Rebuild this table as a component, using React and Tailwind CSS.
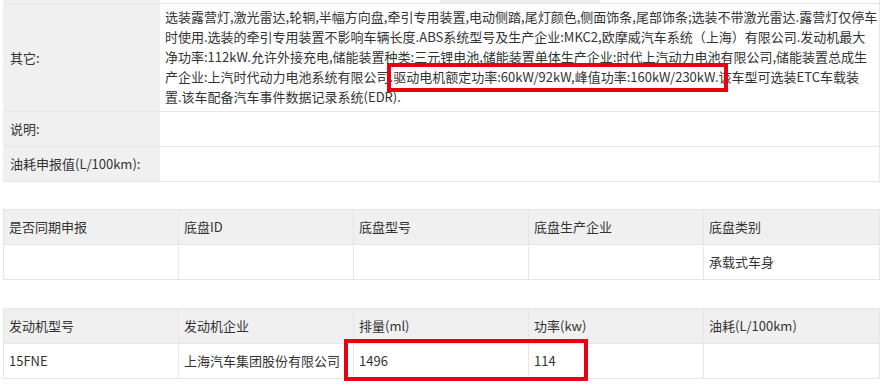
const lines = [
  '选装露营灯,激光雷达,轮辋,半幅方向盘,牵引专用装置,电动侧踏,尾灯颜色,侧面饰条,尾部饰条;选装不带激光雷达.露营灯仅停车',
  '时使用.选装的牵引专用装置不影响车辆长度.ABS系统型号及生产企业:MKC2,欧摩威汽车系统（上海）有限公司.发动机最大',
  '净功率:112kW.允许外接充电,储能装置种类:三元锂电池,储能装置单体生产企业:时代上汽动力电池有限公司,储能装置总成生',
  '产企业:上汽时代动力电池系统有限公司.驱动电机额定功率:60kW/92kW,峰值功率:160kW/230kW.该车型可选装ETC车载装',
  '置.该车配备汽车事件数据记录系统(EDR).',
];

const chassisHead = ['是否同期申报', '底盘ID', '底盘型号', '底盘生产企业', '底盘类别'];
const chassisBody = ['', '', '', '', '承载式车身'];
const engineHead = ['发动机型号', '发动机企业', '排量(ml)', '功率(kw)', '油耗(L/100km)'];
const engineBody = ['15FNE', '上海汽车集团股份有限公司', '1496', '114', ''];

function GridTable({ head, body }) {
  return (
    <div className="ml-[3px] w-[877px] border border-[#e6e6e6]">
      <div className="grid grid-cols-5 h-[35px] bg-[#f0f0f0] border-b border-[#e6e6e6]">
        {head.map((t, i) => (
          <div key={i} className="flex items-center pl-[5px] border-r border-[#e6e6e6] last:border-r-0">
            {t}
          </div>
        ))}
      </div>
      <div className="grid grid-cols-5 h-[34px] bg-white">
        {body.map((t, i) => (
          <div key={i} className="flex items-center pl-[5px] border-r border-[#e6e6e6] last:border-r-0">
            {t}
          </div>
        ))}
      </div>
    </div>
  );
}

export default function App() {
  return (
    <div
      className="relative w-[885px] h-[385px] bg-white overflow-hidden text-[13px] text-[#333]"
      style={{ fontFamily: '"Noto Sans CJK SC", "Noto Sans", sans-serif' }}
    >
      {/* info table */}
      <div className="ml-[3px] w-[877px] border-r border-[#e6e6e6]">
        <div className="grid grid-cols-[157px_280px_160px_1fr] h-[4px] border-b border-[#e6e6e6]">
          <div className="bg-[#f0f0f0]" />
          <div />
          <div className="bg-[#f0f0f0]" />
          <div />
        </div>
        <div className="flex h-[108px] border-b border-[#e6e6e6]">
          <div className="w-[157px] shrink-0 bg-[#f0f0f0] flex items-center pl-[7px]">其它:</div>
          <div className="flex-1 pl-[5px] pt-[3px] leading-[20px]">
            {lines.map((l, i) => (
              <div key={i} className="whitespace-nowrap">{l}</div>
            ))}
          </div>
        </div>
        <div className="flex h-[35px] border-b border-[#e6e6e6]">
          <div className="w-[157px] shrink-0 bg-[#f0f0f0] flex items-center pl-[7px]">说明:</div>
          <div className="flex-1" />
        </div>
        <div className="flex h-[35px] border-b border-[#e6e6e6]">
          <div className="w-[157px] shrink-0 bg-[#f0f0f0] flex items-center pl-[7px]">油耗申报值(L/100km):</div>
          <div className="flex-1" />
        </div>
      </div>

      <div className="mt-[27px]">
        <GridTable head={chassisHead} body={chassisBody} />
      </div>
      <div className="mt-[28px]">
        <GridTable head={engineHead} body={engineBody} />
      </div>

      {/* red highlight boxes */}
      <div className="absolute left-[387px] top-[63px] w-[341px] h-[29px] border-4 border-[#e60012]" />
      <div className="absolute left-[344px] top-[339px] w-[244px] h-[42px] border-4 border-[#e60012]" />
    </div>
  );
}
